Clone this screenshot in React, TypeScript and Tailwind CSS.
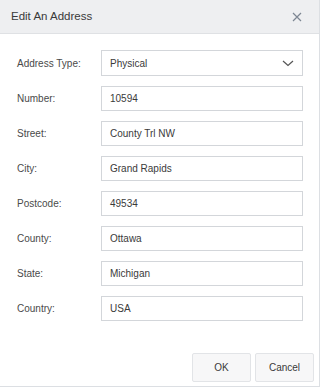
import React from "react";

const fields = [
  { label: "Number:", value: "10594" },
  { label: "Street:", value: "County Trl NW" },
  { label: "City:", value: "Grand Rapids" },
  { label: "Postcode:", value: "49534" },
  { label: "County:", value: "Ottawa" },
  { label: "State:", value: "Michigan" },
  { label: "Country:", value: "USA" },
];

export default function App() {
  return (
    <div
      className="w-[320px] h-[387px] bg-white border-r border-b border-[#dcdfe3] flex flex-col text-[#333]"
      style={{ fontFamily: '"Liberation Sans", Arial, sans-serif' }}
    >
      {/* header */}
      <div className="h-[34px] shrink-0 bg-[#eeeff1] border-b border-[#dfe1e4] flex items-center justify-between pl-[11px] pr-[17px]">
        <span className="text-[11.5px] text-[#3a3a3a]">Edit An Address</span>
        <svg width="10" height="10" viewBox="0 0 10 10" className="text-[#7d8793]">
          <path d="M1 1L9 9M9 1L1 9" stroke="currentColor" strokeWidth="1.2" fill="none" />
        </svg>
      </div>

      {/* form */}
      <div className="flex flex-col gap-[10px] pt-[16px] pl-[17px]">
        <div className="flex items-center">
          <label className="w-[84px] text-[10px] text-[#4a4a4a]">Address Type:</label>
          <div className="w-[202px] h-[26px] border border-[#d3d6da] flex items-center justify-between pl-[8px] pr-[8px] text-[10px] text-[#3a3a3a]">
            <span>Physical</span>
            <svg width="12" height="7" viewBox="0 0 12 7" className="text-[#555]">
              <path d="M1 1L6 5.5L11 1" stroke="currentColor" strokeWidth="1.2" fill="none" />
            </svg>
          </div>
        </div>
        {fields.map((f) => (
          <div key={f.label} className="flex items-center">
            <label className="w-[84px] text-[10px] text-[#4a4a4a]">{f.label}</label>
            <div className="w-[202px] h-[25px] border border-[#d3d6da] flex items-center pl-[8px] text-[10px] text-[#3a3a3a]">
              {f.value}
            </div>
          </div>
        ))}
      </div>

      {/* footer */}
      <div className="flex justify-end gap-[4px] pr-[5px] mt-auto mb-[4px]">
        <button className="w-[59px] h-[29px] rounded-[2px] border border-[#e2e4e7] bg-[#f7f7f8] text-[10px] text-[#3a3a3a]">
          OK
        </button>
        <button className="w-[59px] h-[29px] rounded-[2px] border border-[#e2e4e7] bg-[#f7f7f8] text-[10px] text-[#3a3a3a]">
          Cancel
        </button>
      </div>
    </div>
  );
}
